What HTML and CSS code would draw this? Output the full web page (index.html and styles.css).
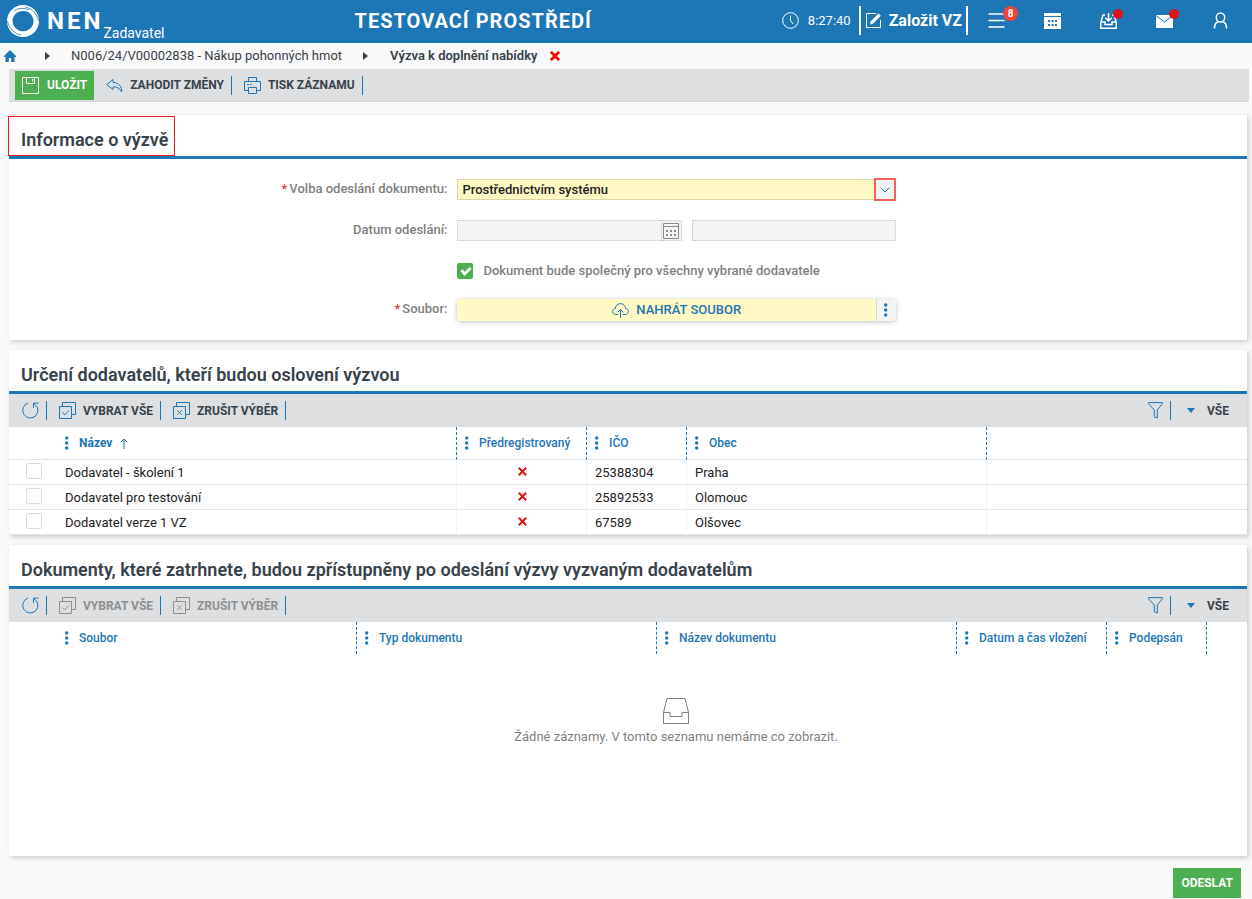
FILE: index.html
```html
<!DOCTYPE html>
<html lang="cs">
<head>
  <meta charset="UTF-8">
  <meta name="viewport" content="width=device-width, initial-scale=1">
  <title>NEN - Výzva k doplnění nabídky</title>
  <link rel="stylesheet" href="styles.css">
</head>
<body>
  <!-- shared icons -->
  <svg class="sprite" width="0" height="0" aria-hidden="true">
    <symbol id="i-reload" viewBox="0 0 17 17"><path d="M6 1.1A7.6 7.6 0 1 0 12 1.700M11.500 6V1.100h5"/></symbol>
    <symbol id="i-check-all" viewBox="0 0 17 17"><path d="M.5 4.5h12v12H.5zM3.5 4V.5h13v12H13M3.5 10.5l2.3 2.3 4-4.3"/></symbol>
    <symbol id="i-check-none" viewBox="0 0 17 17"><path d="M.5 4.5h12v12H.5zM3.5 4V.5h13v12H13M4.3 8.3l4.4 4.4M8.7 8.3l-4.4 4.4"/></symbol>
    <symbol id="i-funnel" viewBox="0 0 15 17"><path d="M.6.6h13.8v1.2L9.3 8v8l-3-1.2V8L.6 1.8z"/></symbol>
    <symbol id="i-more" viewBox="0 0 4 14"><g class="solid"><circle cx="1.700" cy="2" r="1.700"/><circle cx="1.700" cy="7" r="1.700"/><circle cx="1.700" cy="12" r="1.700"/></g></symbol>
    <symbol id="i-cross" viewBox="0 0 9 9"><path d="M.8.8l7.400 7.400M8.200.8L.8 8.200"/></symbol>
  </svg>

  <header class="topbar">
    <a class="logo" href="#">
      <svg width="34" height="34" viewBox="0 0 34 34" aria-hidden="true">
        <path fill="#fff" fill-rule="evenodd" d="M17 1C25.500 1 32.500 7.500 33 16C33.500 25 26.500 33 17 33C8.500 33 1.500 26.500 1 18C.5 9 7.500 1 17 1zM18 7C12 6.500 7 10.500 6.500 16.500C6.500 22.500 11 27 16.500 27.300C22.500 27.500 27.500 23 27.500 17.500C27.500 12 24 7.500 18 7z"/>
        <path fill="none" stroke="#1d76b5" stroke-width=".8" d="M19 3C26 4.500 31 9.500 32.500 17M15 31C8 29.500 3 24.500 1.500 17M8 7C12 4 18 3.500 23 6"/>
      </svg>
      <span class="logo-name">NEN</span>
      <span class="logo-role">Zadavatel</span>
    </a>
    <div class="env">TESTOVACÍ PROSTŘEDÍ</div>
    <div class="tools">
      <span class="clock">
        <svg class="ico" width="17" height="17" viewBox="0 0 17 17" aria-hidden="true"><circle cx="8.500" cy="8.500" r="7.800"/><path d="M8.500 3.500v5l2.500 3.500"/></svg>
        <time>8:27:40</time>
      </span>
      <button type="button" class="new-vz">
        <svg width="17" height="17" viewBox="0 0 17 17" aria-hidden="true"><path class="frame" d="M11 1.500H1.500v14h14V8"/><path fill="#fff" d="M5 12.500l.8-3.300L13.500 1.500l2.400 2.300-7.800 7.800z"/></svg>
        Založit VZ
      </button>
      <button type="button" class="tool" aria-label="Menu">
        <svg class="ico heavy" width="17" height="17" viewBox="0 0 17 17"><path d="M.5 2h16M.5 8.500h16M.5 15h16"/></svg>
        <span class="badge">8</span>
      </button>
      <button type="button" class="tool" aria-label="Kalendář">
        <svg width="17" height="17" viewBox="0 0 17 17"><path fill="#fff" d="M0 1h17v3H0zM0 5h17v12H0z"/><path fill="#1d76b5" d="M4 8h2v2H4zM7.500 8h2v2h-2zM11 8h2v2h-2zM4 12h2v2H4zM7.500 12h2v2h-2zM11 12h2v2h-2z"/></svg>
      </button>
      <button type="button" class="tool" aria-label="Úkoly">
        <svg class="ico heavy" width="17" height="17" viewBox="0 0 17 17"><path d="M5 3H3L.8 10v6.200h15.400V10L14 3h-2M.8 10H5v2.500h7V10h4.200M8.500 1v7.500M5.200 5.700l3.300 3.200 3.300-3.200"/></svg>
        <span class="dot"></span>
      </button>
      <button type="button" class="tool" aria-label="Zprávy">
        <svg width="17" height="17" viewBox="0 0 17 17"><path fill="#fff" d="M0 3h17v13H0z"/><path fill="none" stroke="#1d76b5" d="M0 3.500l8.500 6.500L17 3.500"/></svg>
        <span class="dot"></span>
      </button>
      <button type="button" class="tool" aria-label="Uživatel">
        <svg class="ico heavy" width="17" height="17" viewBox="0 0 17 17"><ellipse cx="8.500" cy="5.500" rx="4.200" ry="4.600"/><path d="M2.500 16.500c0-4 2-6.500 4-6.800M14.500 16.500c0-4-2-6.500-4-6.800"/></svg>
      </button>
    </div>
  </header>

  <nav class="crumbs" aria-label="Cesta">
    <a href="#" class="home" aria-label="Domů">
      <svg width="12" height="12" viewBox="0 0 12 12"><path d="M6 0l6 6v1h-1.500v5H7.200V8H4.800v4H1.500V7H0V6z"/></svg>
    </a>
    <span class="arrow"></span>
    <a href="#">N006/24/V00002838 - Nákup pohonných hmot</a>
    <span class="arrow"></span>
    <strong>Výzva k doplnění nabídky</strong>
    <button type="button" class="close" aria-label="Zavřít"><svg width="10" height="10"><use href="#i-cross"/></svg></button>
  </nav>

  <div class="bar bar-main">
    <button type="button" class="save">
      <svg class="ico" width="17" height="17" viewBox="0 0 17 17"><path d="M.5.5h16v16H.5zM4.500.5v6h8v-6M10.500 2v2.500"/></svg>
      ULOŽIT
    </button>
    <button type="button">
      <svg class="ico" width="17" height="17" viewBox="0 0 17 17"><path d="M7 2.500L.8 7.500 7 12.500V9.800c4 0 7 1.500 8.500 5 1-4.500-2.500-9-8.500-9.500z"/></svg>
      ZAHODIT ZMĚNY
    </button>
    <button type="button">
      <svg class="ico" width="17" height="17" viewBox="0 0 17 17"><path d="M4.500 4.500v-4h8v4M4.500 13.500h-4v-9h16v9h-4M4.500 10.500h8v6h-8zM3 7.500h2M6 7.500h1.500"/></svg>
      TISK ZÁZNAMU
    </button>
  </div>

  <main>
    <form>
    <section class="card">
      <div class="card-head"><h2 class="marked">Informace o výzvě</h2></div>
      <div class="fields">
        <label for="way"><i>*</i>Volba odeslání dokumentu:</label>
        <div class="select">
          <select id="way" name="way" required>
            <option>Prostřednictvím systému</option>
          </select>
          <span class="select-arrow"><svg width="10" height="6" viewBox="0 0 10 6"><path d="M.7.7L5 5 9.300.7"/></svg></span>
        </div>

        <label for="sent">Datum odeslání:</label>
        <div class="dates">
          <div class="date">
            <input type="text" id="sent" name="sent" disabled>
            <button type="button" disabled aria-label="Vybrat datum">
              <svg width="16" height="16" viewBox="0 0 16 16"><path d="M.5.5h15v15H.5zM.5 3.500h15"/><path class="days" d="M3 8h10M3 12h10"/></svg>
            </button>
          </div>
          <input type="text" name="sent-time" aria-label="Čas odeslání" disabled>
        </div>

        <label class="shared">
          <input type="checkbox" name="shared" checked>
          Dokument bude společný pro všechny vybrané dodavatele
        </label>

        <label for="upload"><i>*</i>Soubor:</label>
        <div class="upload">
          <button type="button" id="upload">
            <svg class="ico" width="17" height="17" viewBox="0 0 17 17"><path d="M6 12.500H3.800C2 12.500.6 11.200.6 9.500c0-1.600 1.200-2.800 2.700-3C3.500 3.800 5.800 1.600 8.500 1.600s5 2.200 5.200 4.900c1.500.2 2.700 1.400 2.700 3 0 1.700-1.400 3-3.200 3H11M8.500 16V7.500M5.700 10.300l2.800-2.800 2.800 2.800"/></svg>
            NAHRÁT SOUBOR
          </button>
          <button type="button" class="more" aria-label="Další"><svg width="4" height="14"><use href="#i-more"/></svg></button>
        </div>
      </div>
    </section>

    <section class="card">
      <div class="card-head"><h2>Určení dodavatelů, kteří budou oslovení výzvou</h2></div>
      <div class="bar">
        <button type="button" aria-label="Obnovit"><svg class="ico" width="17" height="17"><use href="#i-reload"/></svg></button>
        <button type="button"><svg class="ico" width="17" height="17"><use href="#i-check-all"/></svg>VYBRAT VŠE</button>
        <button type="button"><svg class="ico" width="17" height="17"><use href="#i-check-none"/></svg>ZRUŠIT VÝBĚR</button>
        <div class="bar-right">
          <button type="button" aria-label="Filtr"><svg class="ico" width="15" height="17"><use href="#i-funnel"/></svg></button>
          <button type="button" class="all"><span class="caret"></span>VŠE</button>
        </div>
      </div>
      <table class="grid lined">
        <colgroup><col class="w-check"><col class="w-400"><col class="w-130"><col class="w-100"><col class="w-300"><col></colgroup>
        <thead>
          <tr>
            <td></td>
            <th class="sorted"><svg width="4" height="14"><use href="#i-more"/></svg>Název<svg class="sort" width="8" height="11" viewBox="0 0 8 11"><path d="M4 11V1M.6 4.400L4 1l3.400 3.400"/></svg></th>
            <th><svg width="4" height="14"><use href="#i-more"/></svg>Předregistrovaný</th>
            <th><svg width="4" height="14"><use href="#i-more"/></svg>IČO</th>
            <th><svg width="4" height="14"><use href="#i-more"/></svg>Obec</th>
            <td></td>
          </tr>
        </thead>
        <tbody>
          <tr>
            <td class="check"><input type="checkbox" aria-label="Dodavatel - školení 1"></td>
            <td>Dodavatel - školení 1</td>
            <td class="no"><svg width="9" height="9" role="img" aria-label="Ne"><use href="#i-cross"/></svg></td>
            <td>25388304</td>
            <td>Praha</td>
            <td></td>
          </tr>
          <tr>
            <td class="check"><input type="checkbox" aria-label="Dodavatel pro testování"></td>
            <td>Dodavatel pro testování</td>
            <td class="no"><svg width="9" height="9" role="img" aria-label="Ne"><use href="#i-cross"/></svg></td>
            <td>25892533</td>
            <td>Olomouc</td>
            <td></td>
          </tr>
          <tr>
            <td class="check"><input type="checkbox" aria-label="Dodavatel verze 1 VZ"></td>
            <td>Dodavatel verze 1 VZ</td>
            <td class="no"><svg width="9" height="9" role="img" aria-label="Ne"><use href="#i-cross"/></svg></td>
            <td>67589</td>
            <td>Olšovec</td>
            <td></td>
          </tr>
        </tbody>
      </table>
    </section>

    <section class="card">
      <div class="card-head"><h2>Dokumenty, které zatrhnete, budou zpřístupněny po odeslání výzvy vyzvaným dodavatelům</h2></div>
      <div class="bar">
        <button type="button" aria-label="Obnovit"><svg class="ico" width="17" height="17"><use href="#i-reload"/></svg></button>
        <button type="button" disabled><svg class="ico" width="17" height="17"><use href="#i-check-all"/></svg>VYBRAT VŠE</button>
        <button type="button" disabled><svg class="ico" width="17" height="17"><use href="#i-check-none"/></svg>ZRUŠIT VÝBĚR</button>
        <div class="bar-right">
          <button type="button" aria-label="Filtr"><svg class="ico" width="15" height="17"><use href="#i-funnel"/></svg></button>
          <button type="button" class="all"><span class="caret"></span>VŠE</button>
        </div>
      </div>
      <table class="grid">
        <colgroup><col class="w-check"><col class="w-300"><col class="w-300"><col class="w-300"><col class="w-150"><col class="w-100"><col></colgroup>
        <thead>
          <tr>
            <td></td>
            <th><svg width="4" height="14"><use href="#i-more"/></svg>Soubor</th>
            <th><svg width="4" height="14"><use href="#i-more"/></svg>Typ dokumentu</th>
            <th><svg width="4" height="14"><use href="#i-more"/></svg>Název dokumentu</th>
            <th><svg width="4" height="14"><use href="#i-more"/></svg>Datum a čas vložení</th>
            <th><svg width="4" height="14"><use href="#i-more"/></svg>Podepsán</th>
            <td></td>
          </tr>
        </thead>
      </table>
      <div class="empty">
        <svg width="26" height="26" viewBox="0 0 26 26" aria-hidden="true"><path d="M.5 14.500L4 .5h18l3.500 14v11H.5zM.5 14.500H7v4h12v-4h6.500"/></svg>
        <p>Žádné záznamy. V tomto seznamu nemáme co zobrazit.</p>
      </div>
    </section>

    <div class="actions"><button type="submit">ODESLAT</button></div>
    </form>
  </main>
</body>
</html>
```
FILE: styles.css
```css
* {
  box-sizing: border-box;
}
body {
  margin: 0;
  background: #f9f9f9;
  color: #37424a;
  font-family: Roboto, "Open Sans", sans-serif;
  font-size: 13px;
  line-height: 16px;
}
button, input, select {
  font: inherit;
  color: inherit;
  margin: 0;
  border-radius: 0;
}
button {
  padding: 0;
  border: 0;
  background: none;
  cursor: pointer;
}
a {
  color: inherit;
  text-decoration: none;
}
svg {
  flex: none;
  display: block;
  fill: none;
  stroke: currentColor;
}
.solid {
  fill: currentColor;
  stroke: none;
}
.sprite {
  position: absolute;
}
.heavy {
  stroke-width: 1.5;
}

/* top bar */
.topbar {
  display: flex;
  justify-content: space-between;
  align-items: center;
  height: 43px;
  padding: 0 4px 2px 6px;
  background: #1d76b5;
  color: #fff;
}
.topbar svg:not(.ico) {
  stroke: none;
}
.topbar .frame {
  fill: none;
  stroke: #fff;
}
.logo {
  display: flex;
  align-items: center;
  height: 41px;
}
.logo-name {
  margin-left: 7px;
  font-size: 24px;
  font-weight: 700;
  letter-spacing: 3px;
}
.logo-role {
  align-self: flex-end;
  font-size: 14px;
}
.env {
  font-size: 20px;
  font-weight: 700;
  letter-spacing: 1px;
}
.tools {
  display: flex;
  align-items: center;
}
.clock {
  display: flex;
  align-items: center;
  gap: 9px;
  margin-right: 8px;
}
.new-vz {
  display: flex;
  align-items: center;
  gap: 7px;
  height: 29px;
  padding: 0 4px;
  border-left: 2px solid #fff;
  border-right: 2px solid #fff;
  font-size: 16px;
  font-weight: 700;
}
.tool {
  position: relative;
  display: flex;
  align-items: center;
  justify-content: center;
  width: 56px;
  height: 41px;
}
.badge {
  position: absolute;
  top: 6px;
  left: 35px;
  width: 15px;
  height: 15px;
  border-radius: 50%;
  background: #f44336;
  font-size: 10px;
  font-weight: 700;
  line-height: 15px;
}
.dot {
  position: absolute;
  top: 9px;
  left: 33px;
  width: 10px;
  height: 10px;
  border-radius: 50%;
  background: #dc1414;
}

/* breadcrumbs */
.crumbs {
  display: flex;
  align-items: center;
  height: 26px;
  padding-left: 4px;
}
.crumbs strong {
  font-weight: 600;
}
.arrow {
  margin: 0 22px 0 21px;
  border-left: 5px solid #37424a;
  border-top: 4px solid transparent;
  border-bottom: 4px solid transparent;
}
.home {
  color: #1d76b5;
}
.home svg {
  fill: currentColor;
  stroke: none;
}
.home + .arrow {
  margin: 0 21px 0 29px;
}
.close {
  margin-left: 13px;
  color: #f00;
  stroke-width: 2.5;
}

/* toolbars */
.bar {
  display: flex;
  align-items: center;
  height: 33px;
  padding-left: 6px;
  background: #dedfe1;
  font-size: 12px;
  font-weight: 700;
}
.bar-main {
  margin: 0 3px 0 9px;
  border-bottom: 1px solid #d4d5d7;
}
.bar button {
  display: flex;
  align-items: center;
  gap: 7px;
  height: 19px;
  padding: 0 7px 0 12px;
  border-right: 1px solid #1d76b5;
}
.bar button:first-child {
  padding: 0 7px;
}
.bar .ico {
  color: #1d76b5;
}
.bar button:disabled {
  color: #8e8f91;
}
.bar button:disabled .ico {
  color: #8e8f91;
}
.bar .save {
  gap: 8px;
  height: 29px;
  border: 0;
  background: #4caf50;
  color: #fff;
}
.bar .save .ico {
  color: #fff;
}
.bar-right {
  display: flex;
  margin-left: auto;
}
.bar .all {
  gap: 12px;
  padding: 0 18px 0 16px;
  border: 0;
}
.caret {
  border-top: 5px solid #1d76b5;
  border-left: 4px solid transparent;
  border-right: 4px solid transparent;
}

/* cards */
main {
  padding: 13px 5px 0 9px;
}
.card {
  margin-bottom: 10px;
  background: #fff;
  box-shadow: 2px 2px 5px rgba(0, 0, 0, 0.18);
}
.card-head {
  height: 44px;
  border-bottom: 3px solid #1d76b5;
}
h2 {
  display: inline-block;
  margin: 2px 0 0;
  padding: 13px 6px 5px 12px;
  font-size: 18px;
  font-weight: 600;
  line-height: 20px;
}
.marked {
  outline: 1px solid #ed1c24;
}

/* form */
.fields {
  display: grid;
  grid-template-columns: 9fr 9fr 7fr;
  grid-auto-rows: minmax(18px, auto);
  gap: 20px 10px;
  padding: 20px 0 19px;
  color: #7f7f7f;
  font-weight: 500;
}
.fields > label {
  grid-column: 1;
  padding-top: 2px;
  text-align: right;
}
.fields > div {
  grid-column: 2;
}
.fields i {
  margin-right: 2px;
  color: #e53935;
  font-style: normal;
}
.select {
  position: relative;
}
.select select {
  display: block;
  width: 100%;
  height: 21px;
  padding: 0 24px 0 4px;
  border: 1px solid #ddd6a6;
  background: #fff9c4;
  color: #222;
  appearance: none;
}
.select-arrow {
  position: absolute;
  top: -1px;
  right: 0;
  display: flex;
  align-items: center;
  justify-content: center;
  width: 22px;
  height: 23px;
  border: 2px solid #f8625e;
  background: #f4f4f4;
  color: #1d76b5;
  pointer-events: none;
}
.dates {
  display: grid;
  grid-template-columns: 11fr 10fr;
  gap: 10px;
}
.date {
  display: flex;
}
.dates input {
  min-width: 0;
  width: 100%;
  height: 21px;
  border: 1px dotted #c4c4c4;
  background: #f4f4f4;
}
.date button {
  display: flex;
  align-items: center;
  justify-content: center;
  flex: none;
  width: 20px;
  height: 21px;
  border: 1px dotted #c4c4c4;
  border-left: 0;
  background: #f4f4f4;
  color: #8a8a8a;
}
.days {
  stroke-width: 2;
  stroke-dasharray: 2 2;
}
.fields .shared {
  grid-column: 2 / 4;
  display: flex;
  align-items: center;
  gap: 10px;
}
input[type="checkbox"] {
  flex: none;
  display: block;
  width: 16px;
  height: 16px;
  border: 1px solid #dcdcdc;
  border-radius: 2px;
  background: #fff;
  appearance: none;
}
input[type="checkbox"]:checked {
  border: 0;
  background: #4caf50;
}
/* white tick */
input[type="checkbox"]:checked::before {
  content: "";
  display: block;
  width: 16px;
  height: 16px;
  background: #fff;
  clip-path: polygon(3px 8px, 5px 6px, 7px 9px, 12px 4px, 14px 6px, 7px 13px);
}
.upload {
  display: flex;
  height: 22px;
  border-radius: 4px;
  overflow: hidden;
  box-shadow: 0 1px 5px rgba(0, 0, 0, 0.25);
  color: #1d76b5;
}
.upload button {
  display: flex;
  align-items: center;
  justify-content: center;
  flex: 1;
  gap: 7px;
  padding-left: 20px;
  background: #fff9c4;
  font-weight: 500;
}
.upload .more {
  flex: none;
  width: 20px;
  padding: 0;
  border-left: 1px solid #d8d8d8;
  background: #f4f4f4;
}

/* tables */
.grid {
  width: 100%;
  table-layout: fixed;
  border-spacing: 0;
}
.w-check {
  width: 48px;
}
.w-100 {
  width: 100px;
}
.w-130 {
  width: 130px;
}
.w-150 {
  width: 150px;
}
.w-300 {
  width: 300px;
}
.w-400 {
  width: 400px;
}
.grid th, .grid td {
  padding: 0 8px;
  text-align: left;
  white-space: nowrap;
}
.grid th {
  height: 32px;
  border-right: 1px dashed #1d76b5;
  color: #1d76b5;
  font-size: 12px;
  font-weight: 500;
}
.grid th.sorted {
  font-weight: 700;
}
.grid th svg {
  display: inline-block;
  margin-right: 10px;
  vertical-align: -3px;
}
.grid th .sort {
  margin: 0 0 0 8px;
  vertical-align: -2px;
}
.lined td, .lined th {
  border-bottom: 1px solid #dde8ec;
}
.lined th {
  height: 33px;
}
.grid tbody td {
  height: 25px;
  padding-top: 2px;
  border-right: 1px dotted #dde8ec;
  color: #222;
}
.grid tbody .check {
  padding: 0 0 2px 17px;
  border-right: 0;
}
.grid tbody td:last-child {
  border-right: 0;
}
.grid tbody .no {
  padding: 0 7px 1px 8px;
  color: #dc1414;
  stroke-width: 2;
}
.no svg {
  margin: 0 auto;
}
.empty {
  display: flex;
  flex-direction: column;
  align-items: center;
  gap: 5px;
  min-height: 202px;
  padding: 44px 0 0 96px;
  color: #7f7f7f;
}
.empty p {
  margin: 0;
}

.actions {
  display: flex;
  justify-content: flex-end;
  padding: 2px 6px 0 0;
}
.actions button {
  height: 30px;
  padding: 0 8px;
  background: #4caf50;
  color: #fff;
  font-size: 12px;
  font-weight: 700;
}
```
